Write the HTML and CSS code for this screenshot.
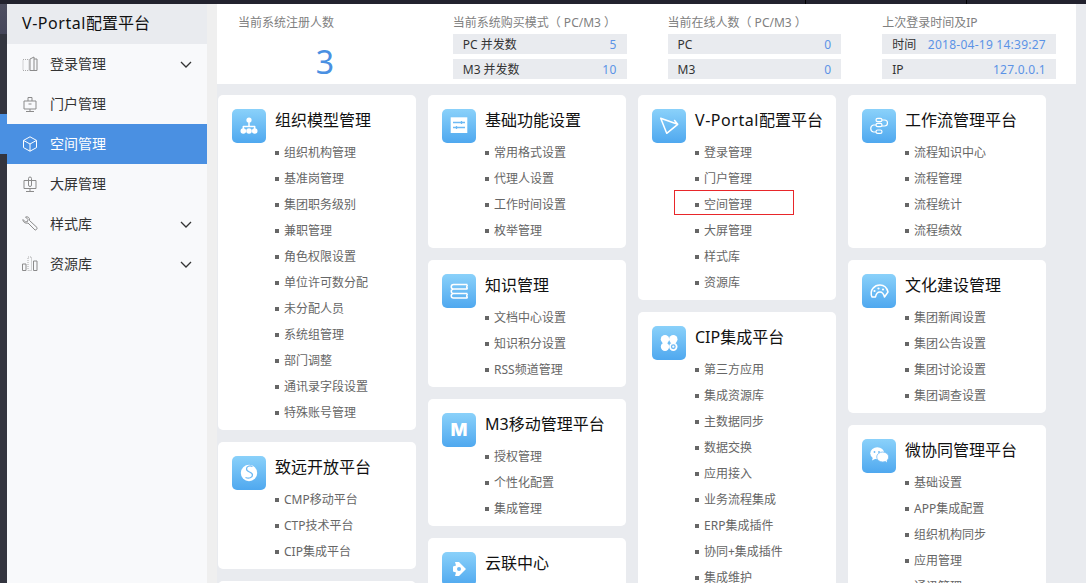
FILE: index.html
```html
<!DOCTYPE html>
<html lang="zh-CN">
<head>
<meta charset="utf-8">
<title>V-Portal配置平台</title>
<link rel="stylesheet" href="styles.css">
</head>
<body>
<div class="topbar"><i class="tick tick-a"></i><i class="tick tick-b"></i></div>
<div class="shell">
  <div class="rail"><div class="rail-top"></div><div class="rail-active"></div></div>
  <nav class="sidebar">
    <div class="side-title"><span class="latin">V-Portal</span>配置平台</div>
    <a class="menu">
      <svg class="menu-icon" viewBox="0 0 16 16"><path class="dot" d="M1 3.500h6v11H1z"/><path d="M8 3 12 1v13.500H8zM12 3h3v11.500h-3"/></svg>
      <span>登录管理</span>
      <svg class="chev" viewBox="0 0 12 7"><path d="M1 1l5 5 5-5"/></svg>
    </a>
    <a class="menu">
      <svg class="menu-icon" viewBox="0 0 16 16"><path d="M2 5h12v8H2zM8 13v2M4 15.500h8M6 5V1.500h4V5M6.500 8h3"/></svg>
      <span>门户管理</span>
    </a>
    <a class="menu active">
      <svg class="menu-icon" viewBox="0 0 16 16"><path d="M8 .8l6.500 3.600v7.200L8 15.200l-6.500-3.600V4.400zM1.500 4.400 8 8l6.500-3.600M8 8v7.200"/></svg>
      <span>空间管理</span>
    </a>
    <a class="menu">
      <svg class="menu-icon" viewBox="0 0 16 16"><path d="M2 4.500h12v8H2zM8 12.500v2.500M4 15.500h8M6.500 9V2.500a1.500 1.500 0 0 1 3 0V9a1.500 1.500 0 0 1-3 0z"/></svg>
      <span>大屏管理</span>
    </a>
    <a class="menu">
      <svg class="menu-icon" viewBox="0 0 16 16"><path d="M1 3.500 3.500 6l2-.5.500-2L3.500 1c2-.8 4.500.5 4 3.500L15 11.500c.6.8-.8 3-2 2.500L6 7c-3 .8-5.500-1.500-5-3.500z"/></svg>
      <span>样式库</span>
      <svg class="chev" viewBox="0 0 12 7"><path d="M1 1l5 5 5-5"/></svg>
    </a>
    <a class="menu">
      <svg class="menu-icon" viewBox="0 0 16 16"><path d="M.5 8h3.500v6.500H.5zM11.500 5H15v9.500h-3.500z"/><path class="dot" d="M6 1h3.500v13.500H6z"/></svg>
      <span>资源库</span>
      <svg class="chev" viewBox="0 0 12 7"><path d="M1 1l5 5 5-5"/></svg>
    </a>
  </nav>
  <main class="main">
    <section class="stats">
      <div class="stat">
        <div class="stat-label">当前系统注册人数</div>
        <div class="stat-big">3</div>
      </div>
      <div class="stat">
        <div class="stat-label">当前系统购买模式（ PC/M3 ）</div>
        <div class="stat-row"><span>PC 并发数</span><b>5</b></div>
        <div class="stat-row"><span>M3 并发数</span><b>10</b></div>
      </div>
      <div class="stat">
        <div class="stat-label">当前在线人数（ PC/M3 ）</div>
        <div class="stat-row"><span>PC</span><b>0</b></div>
        <div class="stat-row"><span>M3</span><b>0</b></div>
      </div>
      <div class="stat">
        <div class="stat-label">上次登录时间及IP</div>
        <div class="stat-row"><span>时间</span><b>2018-04-19 14:39:27</b></div>
        <div class="stat-row"><span>IP</span><b>127.0.0.1</b></div>
      </div>
    </section>
    <div class="board">
      <div class="col">
        <article class="card">
          <svg class="badge" viewBox="0 0 34 34"><circle class="fill" cx="17" cy="11" r="2.600"/><path class="line" d="M17 13v4M11.300 21v-3.500h11.400V21"/><circle class="fill" cx="11.300" cy="22" r="2.800"/><circle class="fill" cx="17" cy="22" r="2.800"/><circle class="fill" cx="22.700" cy="22" r="2.800"/></svg>
          <div class="card-body">
            <h2>组织模型管理</h2>
            <ul><li>组织机构管理</li><li>基准岗管理</li><li>集团职务级别</li><li>兼职管理</li><li>角色权限设置</li><li>单位许可数分配</li><li>未分配人员</li><li>系统组管理</li><li>部门调整</li><li>通讯录字段设置</li><li>特殊账号管理</li></ul>
          </div>
        </article>
        <article class="card">
          <svg class="badge" viewBox="0 0 34 34"><circle class="fill" cx="17" cy="17" r="8.200"/><path class="cut" d="M20.500 10.500c-3-1.500-6 0-6 2.500 0 3.500 6 2.500 6 6 0 2.500-3.500 4-7 2.500"/></svg>
          <div class="card-body">
            <h2>致远开放平台</h2>
            <ul><li>CMP移动平台</li><li>CTP技术平台</li><li>CIP集成平台</li></ul>
          </div>
        </article>
        <article class="card card-empty"></article>
      </div>
      <div class="col">
        <article class="card">
          <svg class="badge" viewBox="0 0 34 34"><rect class="fill" x="8.700" y="8.300" width="16.600" height="15.700"/><path class="cut" d="M11 13.500h12M11 18.500h12M19.500 12v3M14.500 17v3"/></svg>
          <div class="card-body">
            <h2>基础功能设置</h2>
            <ul><li>常用格式设置</li><li>代理人设置</li><li>工作时间设置</li><li>枚举管理</li></ul>
          </div>
        </article>
        <article class="card">
          <svg class="badge" viewBox="0 0 34 34"><path class="line" d="M11.500 10.500h14M11.500 15h14M11.500 19.500h14M11.500 24h14M11.500 10.500c-3 0-3 4.500 0 4.500-3 0-3 4.500 0 4.500-3 0-3 4.500 0 4.500M25.500 10.500c-1 1.500-1 3 0 4.500M25.500 19.500c-1 1.500-1 3 0 4.500"/></svg>
          <div class="card-body">
            <h2>知识管理</h2>
            <ul><li>文档中心设置</li><li>知识积分设置</li><li>RSS频道管理</li></ul>
          </div>
        </article>
        <article class="card">
          <svg class="badge" viewBox="0 0 34 34"><text class="glyph" x="17" y="23" text-anchor="middle">M</text></svg>
          <div class="card-body">
            <h2>M3移动管理平台</h2>
            <ul><li>授权管理</li><li>个性化配置</li><li>集成管理</li></ul>
          </div>
        </article>
        <article class="card">
          <svg class="badge" viewBox="0 0 34 34"><path class="fill" d="M13 10h4l7 7-7 7h-4l1-3.500-3-1v-5l3-1z"/><circle class="cutfill" cx="17" cy="17" r="2"/></svg>
          <div class="card-body">
            <h2>云联中心</h2>
          </div>
        </article>
      </div>
      <div class="col">
        <article class="card">
          <svg class="badge" viewBox="0 0 34 34"><path class="line" d="M8.700 9.300 25.700 15.300 14.700 24.300zM25.700 15.300l-3.500-4.300"/></svg>
          <div class="card-body">
            <h2><span class="latin">V-Portal</span>配置平台</h2>
            <ul><li>登录管理</li><li>门户管理</li><li class="marked">空间管理</li><li>大屏管理</li><li>样式库</li><li>资源库</li></ul>
          </div>
        </article>
        <article class="card">
          <svg class="badge" viewBox="0 0 34 34"><circle class="fill" cx="13" cy="13.300" r="4.200"/><circle class="fill" cx="21.300" cy="13.300" r="4.200"/><circle class="fill" cx="13" cy="20.700" r="4.200"/><circle class="fill" cx="21.300" cy="20.700" r="4.200"/><circle class="cut" cx="21.300" cy="20.700" r="1.800"/></svg>
          <div class="card-body">
            <h2>CIP集成平台</h2>
            <ul><li>第三方应用</li><li>集成资源库</li><li>主数据同步</li><li>数据交换</li><li>应用接入</li><li>业务流程集成</li><li>ERP集成插件</li><li>协同+集成插件</li><li>集成维护</li></ul>
          </div>
        </article>
      </div>
      <div class="col">
        <article class="card">
          <svg class="badge" viewBox="0 0 34 34"><rect class="thin" x="14" y="9.300" width="6" height="3.400" rx="1.700"/><rect class="thin" x="14" y="14.300" width="6" height="3.400" rx="1.700"/><rect class="thin" x="14" y="21" width="6" height="3.400" rx="1.700"/><path class="thin" d="M20 11h2.500a3 3 0 0 1 0 6H20M14 16h-2.500a3.600 3.600 0 0 0 0 7H14"/></svg>
          <div class="card-body">
            <h2>工作流管理平台</h2>
            <ul><li>流程知识中心</li><li>流程管理</li><li>流程统计</li><li>流程绩效</li></ul>
          </div>
        </article>
        <article class="card">
          <svg class="badge" viewBox="0 0 34 34"><path class="line" d="M10 23C7 15.500 13 11 18 11c4 0 7 3 8 7l-3.500 5c-.8-3-2.500-5-4.500-5-2.500 0-4 2-4.500 5z"/><circle class="fill" cx="12.500" cy="17" r="1.100"/><circle class="fill" cx="16.500" cy="14.500" r="1.100"/><circle class="fill" cx="21" cy="15.500" r="1.100"/></svg>
          <div class="card-body">
            <h2>文化建设管理</h2>
            <ul><li>集团新闻设置</li><li>集团公告设置</li><li>集团讨论设置</li><li>集团调查设置</li></ul>
          </div>
        </article>
        <article class="card">
          <svg class="badge" viewBox="0 0 34 34"><ellipse class="fill" cx="15.300" cy="14.300" rx="7" ry="6"/><path class="fill" d="M11 18l-1 3.500 4-2z"/><ellipse class="fill ring" cx="20.700" cy="18" rx="6" ry="5"/><path class="fill" d="M23 21.500l2 2-.5-3.500z"/><circle class="cutfill" cx="12.500" cy="13" r=".9"/><circle class="cutfill" cx="17" cy="13" r=".9"/></svg>
          <div class="card-body">
            <h2>微协同管理平台</h2>
            <ul><li>基础设置</li><li>APP集成配置</li><li>组织机构同步</li><li>应用管理</li><li>通讯管理</li></ul>
          </div>
        </article>
      </div>
    </div>
  </main>
</div>
</body>
</html>
```
FILE: styles.css
```css
*, *::before, *::after { box-sizing: border-box; }
html, body { margin: 0; height: 583px; overflow: hidden; }
body {
  font-family: "Noto Sans", "Noto Sans CJK SC", sans-serif;
  font-size: 12px;
  color: #333;
  background: #efefef;
  display: flex;
  flex-direction: column;
}
.topbar { height: 4px; flex: none; background: #22222e; display: flex; }
.tick { width: 1px; background: #000; }
.tick-a { margin-left: 805px; }
.tick-b { margin-left: 160px; }

.shell { flex: 1; display: flex; min-height: 0; }
.rail { width: 7px; flex: none; background: #33353f; }
.rail-top { height: 30px; background: linear-gradient(#4d4e60, #45465a); margin-bottom: 80px; }
.rail-active { height: 40px; background: #4a90e2; }

.latin { letter-spacing: .55px; }

.sidebar { width: 200px; flex: none; background: #f8f9fb; margin-right: 10px; }
.side-title {
  height: 40px;
  line-height: 39px;
  padding-left: 15px;
  font-size: 16px;
  color: #111;
  background: #e9ebef;
}
.menu {
  height: 40px;
  display: flex;
  align-items: center;
  gap: 12px;
  padding: 0 15px;
  font-size: 14px;
  color: #333;
}
.menu span { margin-top: -2px; }
.menu-icon { width: 16px; height: 16px; fill: none; stroke: #8b8b8b; stroke-width: 1; }
.menu-icon .dot { stroke-dasharray: 1 1; stroke: #aaa; }
.chev { width: 12px; height: 7px; margin-left: auto; fill: none; stroke: #333; stroke-width: 1.300; }
.menu.active { background: #4a90e2; color: #fff; }
.menu.active .menu-icon { stroke: #fff; }

.main { flex: 1; min-width: 0; background: #e9ebef; padding-right: 10px; }
.stats { height: 80px; background: #fff; display: grid; grid-template-columns: repeat(4, 1fr); }
.stat { padding: 10px 20px 0 21px; }
.stat-label { height: 20px; line-height: 18px; color: #808080; white-space: nowrap; }
.stat-big { font-size: 32px; line-height: 44px; margin-top: 6px; text-align: center; color: #4a90e2; }
.stat-row {
  height: 20px;
  margin-bottom: 5px;
  padding: 0 10px;
  display: flex;
  justify-content: space-between;
  align-items: center;
  background: #e9ebef;
  color: #333;
  white-space: nowrap;
}
.stat-row b { font-weight: 400; color: #5b93e6; letter-spacing: .25px; }

.board { display: flex; gap: 12px; padding: 11px 0 0 1px; }
.col { width: 198px; flex: none; display: flex; flex-direction: column; gap: 12px; }
.card {
  display: flex;
  gap: 9px;
  padding: 14px 0 4px 14px;
  background: #fff;
  border-radius: 5px;
}
.card-empty { height: 40px; }
.badge {
  width: 34px;
  height: 34px;
  flex: none;
  border-radius: 5px;
  background: linear-gradient(#8ad1fa, #4fa8ef);
}
.badge .fill { fill: #fff; stroke: none; }
.badge .ring { stroke: #74bdf5; stroke-width: .8; }
.badge .line { fill: none; stroke: #fff; stroke-width: 1.500; stroke-linejoin: round; }
.badge .thin { fill: none; stroke: #fff; stroke-width: 1.200; }
.badge .cut { fill: none; stroke: #6db9f4; stroke-width: 1.300; }
.badge .cutfill { fill: #6db9f4; }
.badge .glyph { font-family: Inter, "Liberation Sans", sans-serif; font-size: 18px; font-weight: 800; fill: #fff; }
.card-body { flex: 1; min-width: 0; }
h2 { margin: 0; font-size: 16px; font-weight: 400; line-height: 23px; color: #111; white-space: nowrap; }
ul { list-style: none; margin: 8px 0 0; padding: 0; }
li {
  position: relative;
  height: 26px;
  line-height: 26px;
  padding-left: 9px;
  color: #666;
  white-space: nowrap;
}
li::before {
  content: "";
  position: absolute;
  left: 0;
  top: 11px;
  width: 4px;
  height: 4px;
  background: #666;
}
.marked::after {
  content: "";
  position: absolute;
  left: -21px;
  top: -2px;
  width: 120px;
  height: 25px;
  border: 1px solid #e8262a;
}
```
